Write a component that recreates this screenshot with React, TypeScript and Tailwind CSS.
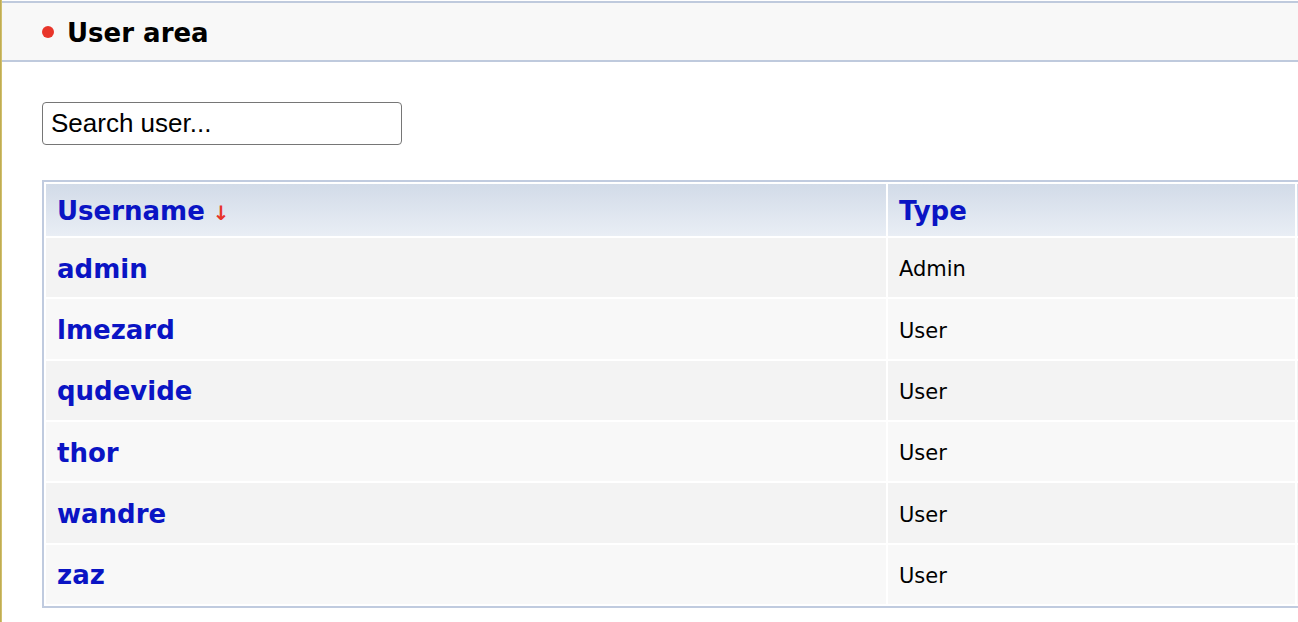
import React, { useState } from 'react';

interface UserRow {
  name: string;
  type: string;
}

const users: UserRow[] = [
  { name: 'admin', type: 'Admin' },
  { name: 'lmezard', type: 'User' },
  { name: 'qudevide', type: 'User' },
  { name: 'thor', type: 'User' },
  { name: 'wandre', type: 'User' },
  { name: 'zaz', type: 'User' },
];

const verdana = "font-['Verdana','DejaVu_Sans',sans-serif]";

export default function App() {
  const [query, setQuery] = useState('Search user...');

  return (
    <div className="flex h-[622px] w-[1298px] overflow-hidden bg-white">
      {/* frame edge on the left */}
      <div className="w-[2px] shrink-0 bg-gradient-to-r from-[#b9a443] to-[#d8c97c]" />

      <div className="min-w-0 flex-1 overflow-hidden">
        {/* Section header */}
        <div className="mt-[1px] flex h-[61px] items-center border-y-2 border-[#bfcadd] bg-[#f8f8f8] pl-[40px]">
          <span className="mr-[13px] mt-[1px] h-[12px] w-[12px] rounded-full bg-[#e8352a]" />
          <h2 className={`${verdana} mt-[2px] text-[26px] font-bold leading-none text-black`}>User area</h2>
        </div>

        {/* Search */}
        <div className="pl-[40px] pt-[40px]">
          <input
            value={query}
            onChange={(e) => setQuery(e.target.value)}
            className="h-[43px] w-[360px] rounded-[4px] border border-[#767676] bg-white px-[8px] font-['Liberation_Sans',Arial,sans-serif] text-[26px] text-black outline-none"
          />
        </div>

        {/* User table */}
        <div className="pl-[40px] pt-[35px]">
          <table className="w-[1600px] table-fixed border-separate border-spacing-[2px] border-2 border-[#c0cbdf]">
            <colgroup>
              <col className="w-[840px]" />
              <col className="w-[407px]" />
              <col />
            </colgroup>
            <thead>
              <tr>
                <th className="h-[52px] bg-gradient-to-b from-[#d2dbe8] to-[#e9eef5] pl-[11px] pt-[2px] text-left align-middle">
                  <span className={`${verdana} text-[26px] font-bold text-[#0a14c4]`}>Username</span>
                  <span className={`${verdana} ml-[8px] text-[20px] font-bold text-[#e8352a]`}>↓</span>
                </th>
                <th className="h-[52px] bg-gradient-to-b from-[#d2dbe8] to-[#e9eef5] pl-[11px] pt-[2px] text-left align-middle">
                  <span className={`${verdana} text-[26px] font-bold text-[#0a14c4]`}>Type</span>
                </th>
                <th className="h-[52px] bg-gradient-to-b from-[#d2dbe8] to-[#e9eef5]" />
              </tr>
            </thead>
            <tbody>
              {users.map((u, i) => {
                const bg = i % 2 === 0 ? 'bg-[#f3f3f3]' : 'bg-[#f8f8f8]';
                return (
                  <tr key={u.name}>
                    <td className={`h-[59.33px] ${bg} pl-[11px] pt-[3px] align-middle`}>
                      <a href="#" className={`${verdana} text-[26px] font-bold text-[#0a14c4]`}>
                        {u.name}
                      </a>
                    </td>
                    <td className={`h-[59.33px] ${bg} pl-[11px] pt-[5px] align-middle`}>
                      <span className={`${verdana} text-[21px] text-black`}>{u.type}</span>
                    </td>
                    <td className={`h-[59.33px] ${bg}`} />
                  </tr>
                );
              })}
            </tbody>
          </table>
        </div>
      </div>
    </div>
  );
}
